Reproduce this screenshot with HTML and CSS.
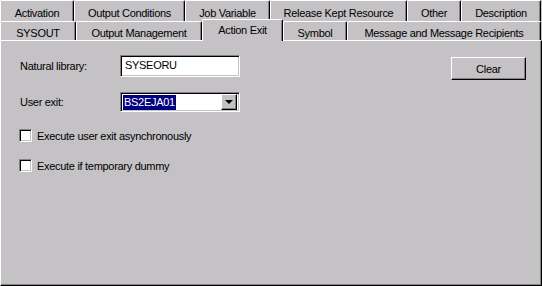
FILE: index.html
```html
<!DOCTYPE html>
<html lang="en">
<head>
  <meta charset="UTF-8">
  <title>Action Exit</title>
  <link rel="stylesheet" href="styles.css">
</head>
<body>
  <div class="tabs">
    <div class="tab-row back">
      <div class="tab w-activation">Activation</div>
      <div class="tab w-outcond">Output Conditions</div>
      <div class="tab w-jobvar">Job Variable</div>
      <div class="tab w-release">Release Kept Resource</div>
      <div class="tab w-other">Other</div>
      <div class="tab w-desc">Description</div>
    </div>
    <div class="tab-row front">
      <div class="tab w-sysout">SYSOUT</div>
      <div class="tab w-outmgmt">Output Management</div>
      <div class="tab active w-action">Action Exit</div>
      <div class="tab w-symbol">Symbol</div>
      <div class="tab w-msg">Message and Message Recipients</div>
    </div>
  </div>

  <div class="panel">
    <div class="fields">
      <div class="field">
        <label>Natural library:</label>
        <div class="textbox">SYSEORU</div>
      </div>
      <div class="field select-row">
        <label>User exit:</label>
        <div class="combo">
          <span class="selected">BS2EJA01</span>
          <span class="drop-btn"><span class="arrow"></span></span>
        </div>
      </div>
      <div class="check first">
        <span class="box"></span>
        <span>Execute user exit asynchronously</span>
      </div>
      <div class="check">
        <span class="box"></span>
        <span>Execute if temporary dummy</span>
      </div>
    </div>
    <button class="btn">Clear</button>
  </div>
</body>
</html>
```

FILE: styles.css
```css
* {
  box-sizing: border-box;
}

body {
  margin: 0;
  width: 542px;
  height: 286px;
  overflow: hidden;
  background: #c4c2c4;
  font-family: 'Liberation Sans', Arial, sans-serif;
  font-size: 11px;
  letter-spacing: -0.3px;
  color: #000;
}

.tab-row {
  display: flex;
  height: 21px;
}

.tab-row.front {
  height: 19px;
  position: relative;
  z-index: 1;
}

.tab {
  height: 100%;
  border-top: 1px solid #fff;
  border-left: 1px solid #fff;
  border-right: 1px solid #000;
  box-shadow: inset -1px 0 0 #848284;
  border-radius: 2px 2px 0 0;
  display: flex;
  align-items: center;
  justify-content: center;
  padding-top: 3px;
  white-space: nowrap;
}

.tab.active {
  height: 22px;
  margin-top: -2px;
  margin-bottom: -1px;
  padding-top: 1px;
  padding-bottom: 3px;
  background: #c4c2c4;
}

.w-activation { width: 74px; }
.w-outcond { width: 111px; }
.w-jobvar { width: 85px; }
.w-release { width: 137px; }
.w-other { width: 54px; }
.w-desc { width: 80px; }

.w-sysout { width: 76px; }
.w-outmgmt { width: 126px; }
.w-action { width: 81px; }
.w-symbol { width: 64px; }
.w-msg { width: 194px; }

.panel {
  height: 246px;
  border-top: 1px solid #fff;
  border-left: 1px solid #fff;
  border-right: 1px solid #000;
  border-bottom: 1px solid #000;
  box-shadow: inset -1px -1px 0 #848284;
  display: flex;
  align-items: flex-start;
  padding: 14px 15px 0 19px;
}

.fields {
  display: flex;
  flex-direction: column;
}

.field {
  display: flex;
  align-items: center;
}

.field label {
  width: 100px;
}

.textbox {
  width: 120px;
  height: 22px;
  background: #fff;
  border: 1px solid;
  border-color: #848284 #fff #fff #848284;
  box-shadow: inset 1px 1px 0 #000, inset -1px -1px 0 #c4c2c4;
  padding: 3px 0 0 4px;
}

.select-row {
  margin-top: 15px;
}

.combo {
  width: 120px;
  height: 20px;
  background: #fff;
  border: 1px solid;
  border-color: #848284 #fff #fff #848284;
  box-shadow: inset 1px 1px 0 #000, inset -1px -1px 0 #c4c2c4;
  display: flex;
  align-items: center;
  justify-content: space-between;
  padding: 2px;
}

.selected {
  background: #000080;
  color: #fff;
  padding: 1px 1px;
  line-height: 13px;
}

.drop-btn {
  width: 16px;
  height: 16px;
  background: #c4c2c4;
  border: 1px solid;
  border-color: #fff #000 #000 #fff;
  box-shadow: inset -1px -1px 0 #848284;
  display: flex;
  align-items: center;
  justify-content: center;
}

.arrow {
  width: 0;
  height: 0;
  border-left: 4px solid transparent;
  border-right: 4px solid transparent;
  border-top: 4px solid #000;
}

.check {
  display: flex;
  align-items: center;
  gap: 5px;
  margin-top: 17px;
  margin-left: -1px;
}

.check.first {
  margin-top: 17px;
}

.box {
  width: 13px;
  height: 13px;
  background: #fff;
  border: 1px solid;
  border-color: #848284 #fff #fff #848284;
  box-shadow: inset 1px 1px 0 #000, inset -1px -1px 0 #c4c2c4;
}

.btn {
  margin-left: auto;
  margin-top: 2px;
  width: 75px;
  height: 23px;
  background: #c4c2c4;
  font-family: inherit;
  font-size: 11px;
  letter-spacing: -0.3px;
  color: #000;
  border: 1px solid;
  border-color: #fff #000 #000 #fff;
  box-shadow: inset -1px -1px 0 #848284;
  padding: 0;
}
```
